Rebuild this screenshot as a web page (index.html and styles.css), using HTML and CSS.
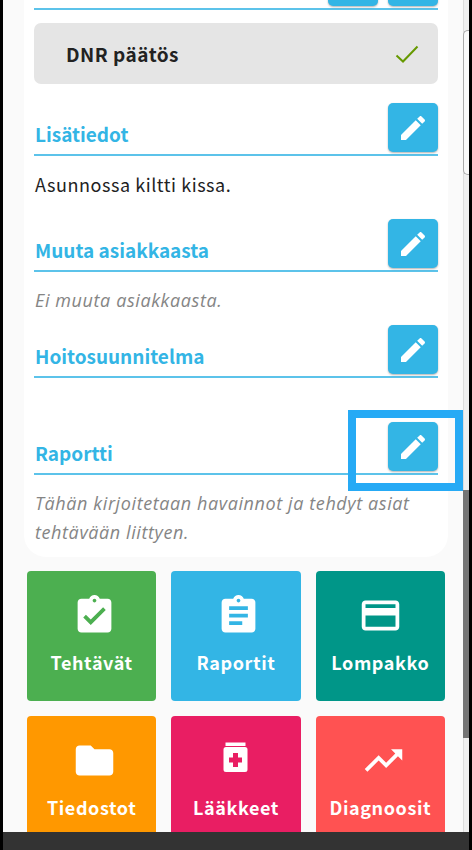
FILE: index.html
```html
<!DOCTYPE html>
<html lang="fi">
<head>
<meta charset="utf-8">
<title>Tehtävä</title>
<link rel="stylesheet" href="styles.css">
</head>
<body>
<div class="frame">
  <div class="main">
    <div class="viewport">
      <div class="scroll">
        <section class="card">
          <div class="head">
            <h2 class="head-title"></h2>
            <button class="edit" aria-label="Muokkaa"></button>
            <button class="edit" aria-label="Muokkaa"></button>
          </div>
          <div class="dnr">
            <span class="dnr-label">DNR päätös</span>
            <svg class="dnr-check" viewBox="0 0 24 18"><path d="M1.5 10.5 L8 16.5 L22.5 1.5" fill="none" stroke="#669900" stroke-width="2"/></svg>
          </div>
          <div class="head head--gap">
            <h2 class="head-title">Lisätiedot</h2>
            <button class="edit" aria-label="Muokkaa"><svg class="pencil" viewBox="0 0 24 24"><path d="M3 17.25V21h3.75L17.81 9.94l-3.75-3.75L3 17.25zM20.71 7.04c.39-.39.39-1.02 0-1.41l-2.34-2.34c-.39-.39-1.02-.39-1.41 0l-1.83 1.83 3.75 3.75 1.83-1.83z"/></svg></button>
          </div>
          <p class="body body--wide">Asunnossa kiltti kissa.</p>
          <div class="head">
            <h2 class="head-title">Muuta asiakkaasta</h2>
            <button class="edit" aria-label="Muokkaa"><svg class="pencil" viewBox="0 0 24 24"><path d="M3 17.25V21h3.75L17.81 9.94l-3.75-3.75L3 17.25zM20.71 7.04c.39-.39.39-1.02 0-1.41l-2.34-2.34c-.39-.39-1.02-.39-1.41 0l-1.83 1.83 3.75 3.75 1.83-1.83z"/></svg></button>
          </div>
          <p class="body body--note body--narrow">Ei muuta asiakkaasta.</p>
          <div class="head">
            <h2 class="head-title">Hoitosuunnitelma</h2>
            <button class="edit" aria-label="Muokkaa"><svg class="pencil" viewBox="0 0 24 24"><path d="M3 17.25V21h3.75L17.81 9.94l-3.75-3.75L3 17.25zM20.71 7.04c.39-.39.39-1.02 0-1.41l-2.34-2.34c-.39-.39-1.02-.39-1.41 0l-1.83 1.83 3.75 3.75 1.83-1.83z"/></svg></button>
          </div>
          <div class="empty"></div>
          <div class="head">
            <h2 class="head-title">Raportti</h2>
            <button class="edit" aria-label="Muokkaa"><svg class="pencil" viewBox="0 0 24 24"><path d="M3 17.25V21h3.75L17.81 9.94l-3.75-3.75L3 17.25zM20.71 7.04c.39-.39.39-1.02 0-1.41l-2.34-2.34c-.39-.39-1.02-.39-1.41 0l-1.83 1.83 3.75 3.75 1.83-1.83z"/></svg></button>
          </div>
          <p class="body body--note body--last">Tähän kirjoitetaan havainnot ja tehdyt asiat tehtävään liittyen.</p>
        </section>
        <nav class="tiles">
          <a class="tile tile--green">
            <svg class="tile-icon tile-icon--shift" viewBox="0 0 24 24"><path d="M19 3h-4.18C14.4 1.84 13.3 1 12 1c-1.3 0-2.4.84-2.82 2H5c-1.1 0-2 .9-2 2v14c0 1.1.9 2 2 2h14c1.1 0 2-.9 2-2V5c0-1.1-.9-2-2-2zm-7 0c.55 0 1 .45 1 1s-.45 1-1 1-1-.45-1-1 .45-1 1-1zm-2 14l-4-4 1.41-1.41L10 14.17l6.59-6.59L18 9l-8 8z"/></svg>
            <span class="tile-label">Tehtävät</span>
          </a>
          <a class="tile tile--blue">
            <svg class="tile-icon tile-icon--shift" viewBox="0 0 24 24"><path d="M19 3h-4.18C14.4 1.84 13.3 1 12 1c-1.3 0-2.4.84-2.82 2H5c-1.1 0-2 .9-2 2v14c0 1.1.9 2 2 2h14c1.1 0 2-.9 2-2V5c0-1.1-.9-2-2-2zm-7 0c.55 0 1 .45 1 1s-.45 1-1 1-1-.45-1-1 .45-1 1-1zm2 14H7v-2h7v2zm3-4H7v-2h10v2zm0-4H7V7h10v2z"/></svg>
            <span class="tile-label">Raportit</span>
          </a>
          <a class="tile tile--teal">
            <svg class="tile-icon" viewBox="0 0 24 24"><path d="M20 4H4c-1.11 0-1.99.89-1.99 2L2 18c0 1.11.89 2 2 2h16c1.11 0 2-.89 2-2V6c0-1.11-.89-2-2-2zm0 14H4v-6h16v6zm0-10H4V6h16v2z"/></svg>
            <span class="tile-label">Lompakko</span>
          </a>
          <a class="tile tile--orange">
            <svg class="tile-icon tile-icon--shift" viewBox="0 0 24 24"><path d="M10 4H4c-1.1 0-1.99.9-1.99 2L2 18c0 1.1.9 2 2 2h16c1.1 0 2-.9 2-2V8c0-1.1-.9-2-2-2h-8l-2-2z"/></svg>
            <span class="tile-label">Tiedostot</span>
          </a>
          <a class="tile tile--pink">
            <svg class="tile-icon" viewBox="0 0 45 45"><path d="M12.5 4.5h20V8h-20z"/><path fill-rule="evenodd" d="M13 9h19a2.5 2.5 0 0 1 2.5 2.5v20a2.5 2.5 0 0 1-2.5 2.5H13a2.5 2.500 0 0 1-2.5-2.5v-20A2.5 2.5 0 0 1 13 9zm7 6v4.500h-4v5h4V29h5v-4.500h4v-5h-4V15z"/></svg>
            <span class="tile-label">Lääkkeet</span>
          </a>
          <a class="tile tile--red">
            <svg class="tile-icon tile-icon--shift" viewBox="0 0 24 24"><path d="M16 6l2.29 2.29-4.88 4.88-4-4L2 16.59 3.41 18l6-6 4 4 6.3-6.29L22 12V6z"/></svg>
            <span class="tile-label">Diagnoosit</span>
          </a>
        </nav>
      </div>
      <div class="highlight"></div>
    </div>
    <div class="scrollbar">
      <div class="scrollbar-notch"></div>
      <div class="scrollbar-thumb"></div>
    </div>
  </div>
  <div class="bar"></div>
</div>
</body>
</html>
```
FILE: styles.css
```css
* { box-sizing: border-box; }
html, body { margin: 0; height: 100%; background: #000; }
body {
  font-family: "Noto Sans CJK SC", "Noto Sans", sans-serif;
  overflow: hidden;
}
.frame {
  height: 850px;
  padding: 0 3px;
  display: flex;
  flex-direction: column;
  background: #000;
}
.main { flex: 1; min-height: 0; display: flex; }
.viewport {
  position: relative;
  flex: 1;
  overflow: hidden;
  background: #fafafa;
}
.scroll { margin-top: -43px; }
.card {
  margin: 0 15px 0 21px;
  padding: 0 10px 8px;
  background: #fff;
  border-radius: 0 0 22px 22px;
}
.head {
  height: 53px;
  display: flex;
  align-items: flex-start;
  justify-content: flex-end;
  gap: 10px;
  border-bottom: 2px solid #5cc3ea;
}
.head--gap { margin-top: 19px; }
.head-title {
  margin: auto auto 0 1px;
  padding-bottom: 6px;
  font-size: 19px;
  line-height: 28px;
  font-weight: 700;
  letter-spacing: 0;
  color: #33b5e5;
}
.edit {
  flex: none;
  width: 50px;
  height: 49px;
  padding: 0;
  border: 0;
  border-radius: 5px;
  background: #33b5e5;
  box-shadow: 0 1px 2px rgba(0, 0, 0, .3);
  display: flex;
  align-items: center;
  justify-content: center;
}
.pencil { width: 32px; height: 32px; fill: #fff; }
.dnr {
  margin-top: 13px;
  height: 61px;
  padding: 0 19px 0 32px;
  display: flex;
  align-items: center;
  justify-content: space-between;
  background: #e5e5e5;
  border-radius: 7px;
}
.dnr-label {
  font-size: 19px;
  font-weight: 700;
  letter-spacing: .5px;
  color: #222;
}
.dnr-check { width: 24px; height: 18px; }
.body {
  margin: 0;
  padding: 14px 0 2px 1px;
  font-size: 18px;
  line-height: 29px;
  letter-spacing: .55px;
  color: #222;
}
.body--wide { margin-bottom: 18px; }
.body--narrow { margin-bottom: 8px; }
.body--note {
  font-family: "Open Sans", "Noto Sans", sans-serif;
  font-size: 18px;
  font-weight: 400;
  font-style: italic;
  letter-spacing: .6px;
  color: #858585;
}
.empty { height: 44px; }
.tiles {
  margin: 14px 18px 0 24px;
  display: grid;
  grid-template-columns: repeat(3, 1fr);
  gap: 15px;
}
.tile {
  height: 130px;
  padding-top: 22px;
  border-radius: 4px;
  display: flex;
  flex-direction: column;
  align-items: center;
  color: #fff;
}
.tile--green { background: #4caf50; }
.tile--blue { background: #33b5e5; }
.tile--teal { background: #009688; }
.tile--orange { background: #ff9800; }
.tile--pink { background: #e91e63; }
.tile--red { background: #ff5252; }
.tile-icon { width: 45px; height: 45px; fill: #fff; flex: none; }
.tile-icon--shift { margin-left: 6px; }
.tile-label {
  margin-top: 11px;
  font-size: 18px;
  line-height: 26px;
  font-weight: 700;
  letter-spacing: .6px;
}
.highlight {
  position: absolute;
  left: 345px;
  top: 410px;
  width: 115px;
  height: 81px;
  border: 8px solid #26aaf5;
}
.scrollbar {
  flex: none;
  width: 6px;
  background: #f0f0f0;
  border-left: 1px solid #ddd;
}
.scrollbar-notch {
  height: 145px;
  margin: 30px 0 0 -1px;
  border: 1px solid #aaa;
  border-right: 0;
  border-radius: 5px 0 0 5px;
  background: #fafafa;
}
.scrollbar-thumb {
  height: 248px;
  margin: 315px 0 0 -1px;
  background: #757575;
}
.bar { flex: none; height: 18px; background: #333; }
```
